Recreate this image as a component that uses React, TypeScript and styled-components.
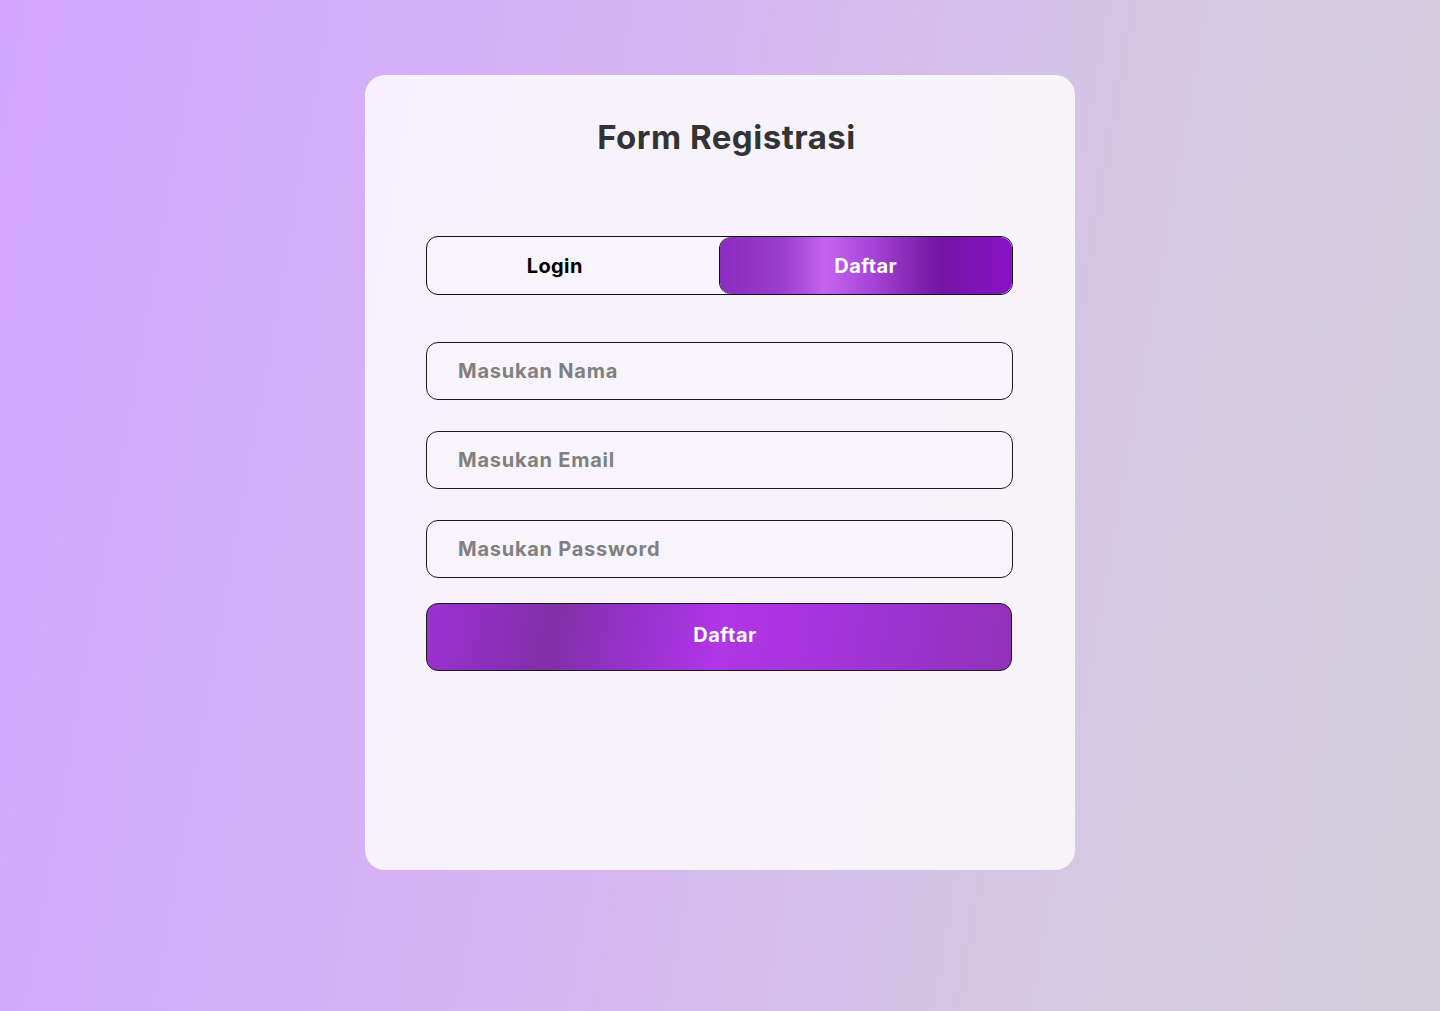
import React from "react";
import styled, { createGlobalStyle } from "styled-components";

const Global = createGlobalStyle`
  html, body { margin: 0; padding: 0; }
  body {
    font-family: Inter, "Noto Sans", sans-serif;
    background: linear-gradient(100deg, #d3a7ff 0%, #d5b6f2 45%, #d5cbe0 80%, #d4cfdc 100%);
    min-height: 1011px;
  }
  * { box-sizing: border-box; }
`;

const Page = styled.div`
  display: flex;
  justify-content: center;
  padding-top: 75px;
  min-height: 1011px;
`;

const Card = styled.div`
  width: 710px;
  height: 795px;
  background: linear-gradient(100deg, #f7f1fd 0%, #f7f3fb 60%, #f6f4f8 100%);
  border-radius: 20px;
  padding: 40px 62px 0 61px;
  display: flex;
  flex-direction: column;
`;

const Title = styled.h1`
  margin: 0;
  padding-left: 14px;
  text-align: center;
  font-size: 33px;
  font-weight: 700;
  color: #333;
  line-height: 44px;
  letter-spacing: 0.5px;
`;

const Toggle = styled.div`
  margin-top: 77px;
  height: 59px;
  border: 1px solid #111;
  border-radius: 12px;
  display: flex;
  overflow: hidden;
  background: #f8f4fc;
`;

const Tab = styled.button<{ $active?: boolean }>`
  flex: none;
  width: 50%;
  border: none;
  font-family: inherit;
  font-size: 20px;
  font-weight: 700;
  letter-spacing: 0.4px;
  cursor: pointer;
  border-radius: ${(p) => (p.$active ? "12px" : "0")};
  color: ${(p) => (p.$active ? "#fff" : "#000")};
  padding: ${(p) => (p.$active ? "0" : "0 37px 0 0")};
  background: ${(p) =>
    p.$active
      ? "linear-gradient(90deg, #8a2cbd 0%, #9a3fcf 22%, #c464ef 36%, #a545d8 52%, #7c1fab 70%, #7314a4 76%, #8a12c8 100%)"
      : "transparent"};
  box-shadow: ${(p) => (p.$active ? "-1px 0 0 #111" : "none")};
`;

const Form = styled.form`
  margin-top: 47px;
  display: flex;
  flex-direction: column;
`;

const Input = styled.input`
  height: 58px;
  border: 1px solid #1a1a1a;
  border-radius: 12px;
  background: #f8f4fc;
  padding: 0 0 0 31px;
  font-family: inherit;
  font-size: 20px;
  font-weight: 700;
  letter-spacing: 0.75px;
  color: #333;
  margin-bottom: 31px;
  outline: none;
  &::placeholder { color: #808080; }
  &:last-of-type { margin-bottom: 25px; }
`;

const Submit = styled.button`
  height: 68px;
  width: 586px;
  border: 1px solid #1a1a1a;
  border-radius: 12px;
  font-family: inherit;
  font-size: 20px;
  font-weight: 700;
  letter-spacing: 0.5px;
  color: #fff;
  cursor: pointer;
  padding: 0 0 4px 12px;
  background: linear-gradient(100deg, #9c31d2 0%, #8a2fb8 14%, #8030a6 22%, #9432c8 34%, #b035e6 50%, #a734dc 66%, #9d33d0 80%, #9032b8 100%);
`;

export default function App() {
  return (
    <>
      <Global />
      <Page>
        <Card>
          <Title>Form Registrasi</Title>
          <Toggle>
            <Tab type="button">Login</Tab>
            <Tab type="button" $active>Daftar</Tab>
          </Toggle>
          <Form onSubmit={(e) => e.preventDefault()}>
            <Input type="text" placeholder="Masukan Nama" />
            <Input type="email" placeholder="Masukan Email" />
            <Input type="password" placeholder="Masukan Password" />
            <Submit type="submit">Daftar</Submit>
          </Form>
        </Card>
      </Page>
    </>
  );
}
